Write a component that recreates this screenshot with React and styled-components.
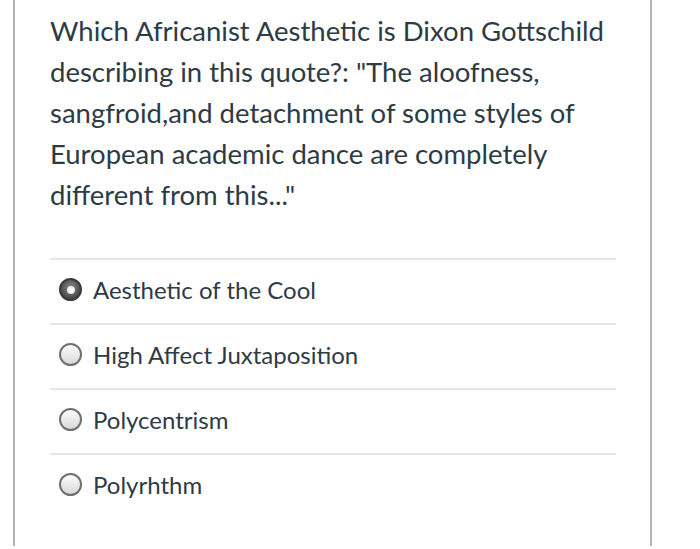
import React, { useState } from "react";
import styled, { createGlobalStyle } from "styled-components";

const GlobalStyle = createGlobalStyle`
  html, body {
    margin: 0;
    padding: 0;
    background: #fff;
  }
  body {
    font-family: Lato, "Open Sans", sans-serif;
    color: #2d3b45;
  }
`;

const options = [
  "Aesthetic of the Cool",
  "High Affect Juxtaposition",
  "Polycentrism",
  "Polyrhthm",
];

const App = () => {
  const [selected, setSelected] = useState(0);

  return (
    <>
      <GlobalStyle />
      <Card>
        <Question>
          Which Africanist Aesthetic is Dixon Gottschild describing in this
          quote?: "The aloofness, sangfroid,and detachment of some styles of
          European academic dance are completely different from this..."
        </Question>
        <Answers>
          {options.map((label, i) => (
            <Answer key={label} onClick={() => setSelected(i)}>
              <Radio checked={selected === i} />
              <AnswerText>{label}</AnswerText>
            </Answer>
          ))}
        </Answers>
      </Card>
    </>
  );
};

const Card = styled.section`
  box-sizing: border-box;
  margin-left: 13px;
  width: 639px;
  min-height: 546px;
  border-left: 2px solid #b4b4b4;
  border-right: 2px solid #b4b4b4;
  padding: 10px 34px 0 35px;
`;

const Question = styled.p`
  margin: 0;
  font-size: 27.5px;
  line-height: 41px;
  color: #2d3b45;
`;

const Answers = styled.div`
  margin-top: 43px;
  display: flex;
  flex-direction: column;
`;

const Answer = styled.label`
  display: flex;
  align-items: center;
  gap: 11px;
  height: 65px;
  padding: 0 0 4px 9px;
  border-top: 2px solid #e6e6e6;
  box-sizing: border-box;
  cursor: pointer;
`;

const Radio = styled.span`
  position: relative;
  flex: none;
  width: 23px;
  height: 23px;
  box-sizing: border-box;
  border-radius: 50%;
  border: 2px solid ${(p) => (p.checked ? "#3a3a3a" : "#6f6f6f")};
  background: ${(p) =>
    p.checked
      ? "radial-gradient(circle at 50% 40%, #8a8a8a 0%, #4a4a4a 70%, #333 100%)"
      : "linear-gradient(#fdfdfd, #d8d8d8)"};

  &::after {
    content: "";
    display: ${(p) => (p.checked ? "block" : "none")};
    position: absolute;
    left: 50%;
    top: 50%;
    width: 8px;
    height: 8px;
    margin: -4px 0 0 -4px;
    border-radius: 50%;
    background: radial-gradient(circle, #fff 0%, #ddd 100%);
  }
`;

const AnswerText = styled.span`
  font-size: 24px;
  line-height: 30px;
  color: #2d3b45;
`;

export default App;
